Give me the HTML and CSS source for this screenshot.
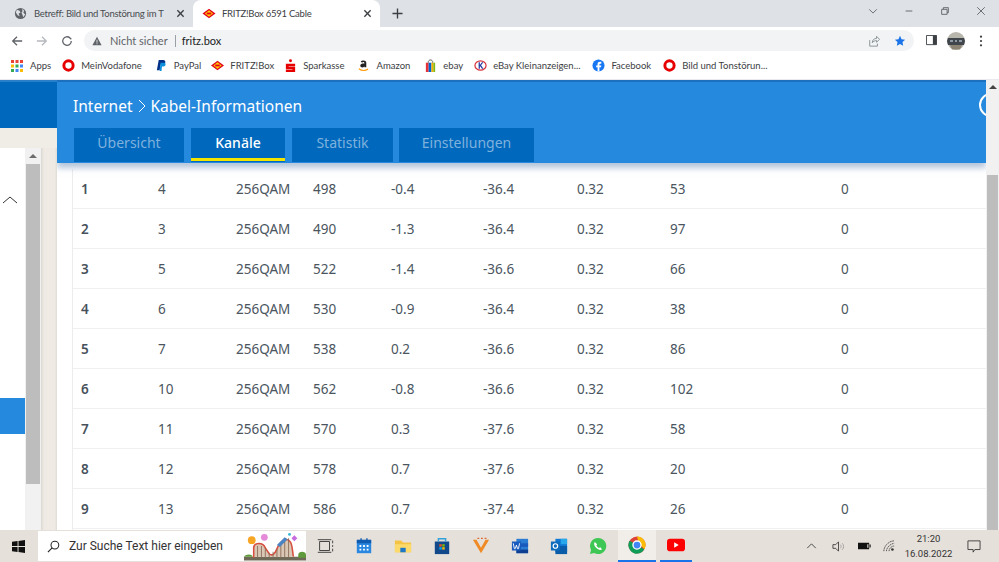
FILE: index.html
```html
<!DOCTYPE html>
<html lang="de">
<head>
<meta charset="utf-8">
<title>FRITZ!Box 6591 Cable</title>
<link rel="stylesheet" href="styles.css">
</head>
<body>
<div class="tabstrip">
  <div class="tab tab-inactive">
    <svg class="favicon" viewBox="0 0 14 14"><circle cx="7" cy="7" r="6" fill="#5f6368"/><path d="M3 3l3 1 1 2-2 1 1 3-2-1-2-3zM9 2l2 2-1 2 2 2-2 3-1-3-1-2 1-1z" fill="#dee1e6"/></svg>
    <span class="tab-title">Betreff: Bild und Tonstörung im T</span>
    <svg class="tab-x" viewBox="0 0 10 10"><path d="M1.5 1.5l7 7M8.500 1.500l-7 7"/></svg>
  </div>
  <div class="tab tab-active">
    <svg class="favicon" viewBox="0 0 14 14"><path d="M7 2l7 5-7 5-7-5z" fill="#e2001a"/><path d="M7 3.500l4.500 3.500L7 10.500 2.500 7z" fill="#ffcc00"/><path d="M4.500 6h5v2h-5z" fill="#e2001a"/></svg>
    <span class="tab-title">FRITZ!Box 6591 Cable</span>
    <svg class="tab-x" viewBox="0 0 10 10"><path d="M1.5 1.5l7 7M8.500 1.500l-7 7"/></svg>
  </div>
  <svg class="newtab" viewBox="0 0 12 12"><path d="M6 .5v11M.5 6h11"/></svg>
  <div class="winctrls">
    <svg viewBox="0 0 12 12"><path d="M1.500 4l4.500 4.500L10.500 4"/></svg>
    <svg viewBox="0 0 12 12"><path d="M2 6h8"/></svg>
    <svg viewBox="0 0 12 12"><path d="M2 4h6.500v6H2zM4 4V2h6v6H8.500"/></svg>
    <svg viewBox="0 0 12 12"><path d="M1.500 1.500l9 9M10.500 1.500l-9 9"/></svg>
  </div>
</div>

<div class="toolbar">
  <svg class="navbtn" viewBox="0 0 14 14"><path d="M13 7H2M7 2L2 7l5 5" stroke="#5f6368"/></svg>
  <svg class="navbtn" viewBox="0 0 14 14"><path d="M1 7h11M7 2l5 5-5 5" stroke="#b5b8bc"/></svg>
  <svg class="navbtn" viewBox="0 0 14 14"><path d="M12 7a5 5 0 1 1-1.500-3.500L12 5" stroke="#5f6368"/><path d="M12.500 1.500v4h-4z" fill="#5f6368"/></svg>
  <div class="omnibox">
    <svg class="warn" viewBox="0 0 12 12"><path d="M6 1l5.500 10H.5z" fill="#5f6368"/><path d="M5.500 4.500h1v3.500h-1zM5.500 8.800h1v1h-1z" fill="#f1f3f4"/></svg>
    <span class="insecure">Nicht sicher</span>
    <span class="omni-sep"></span>
    <span class="url">fritz.box</span>
    <svg class="share" viewBox="0 0 14 14"><path d="M2 6v7h9v-3M5 9c0-3 2-5 5-5V1.500L13.500 5 10 8.500V6.500C8 6.500 6 7.500 5 9z" fill="none" stroke="#80868b"/></svg>
    <svg class="star" viewBox="0 0 14 14"><path d="M7 1l1.800 3.900 4.200.5-3.100 2.900.8 4.200L7 10.400 3.300 12.500l.8-4.200L1 5.400l4.200-.5z" fill="#1a73e8"/></svg>
  </div>
  <svg class="panelbtn" viewBox="0 0 12 12"><path d="M.5.5h11v10H.5z" fill="#fff" stroke="#3c4043"/><path d="M7.500.5h4v10h-4z" fill="#3c4043"/></svg>
  <svg class="avatar" viewBox="0 0 18 18"><circle cx="9" cy="9" r="9" fill="#b9b6ae"/><path d="M1 6h16l1 3-1 4H1L0 9z" fill="#3f454b"/><path d="M3 13h12l-2 4.500H5z" fill="#8b8472"/><path d="M3 8h3v2H3zM8 8h2v2H8zM12 8h3v2h-3z" fill="#8d99a3"/></svg>
  <svg class="menu" viewBox="0 0 4 14"><circle cx="2" cy="2" r="1.300"/><circle cx="2" cy="7" r="1.300"/><circle cx="2" cy="12" r="1.300"/></svg>
</div>

<div class="bookmarks">
  <div class="bm bm-apps"><svg viewBox="0 0 12 12"><g><path fill="#ea4335" d="M0 0h3v3H0zM4.500 0h3v3h-3zM9 0h3v3H9z"/><path fill="#fbbc04" d="M0 4.500h3v3H0zM9 9h3v3H9z"/><path fill="#34a853" d="M4.500 4.500h3v3h-3zM0 9h3v3H0z"/><path fill="#4285f4" d="M9 4.500h3v3H9zM4.500 9h3v3h-3z"/></g></svg><span>Apps</span></div>
  <div class="bm bm-voda"><svg viewBox="0 0 14 14"><circle cx="7" cy="7" r="5" fill="none" stroke="#e60000" stroke-width="3.200"/></svg><span>MeinVodafone</span></div>
  <div class="bm bm-paypal"><svg viewBox="0 0 14 14"><path d="M4 1h5c3 0 3 5-1 5H6l-1 6H2z" fill="#003087"/><path d="M6 4h4c2 0 2 4-1 4H7.500L7 13H5z" fill="#0a8fdc"/></svg><span>PayPal</span></div>
  <div class="bm bm-fritz"><svg viewBox="0 0 14 14"><path d="M7 2l7 5-7 5-7-5z" fill="#e2001a"/><path d="M7 3.500l4.500 3.500L7 10.500 2.500 7z" fill="#ffcc00"/><path d="M4.500 6h5v2h-5z" fill="#e2001a"/></svg><span>FRITZ!Box</span></div>
  <div class="bm bm-spark"><svg viewBox="0 0 14 14"><circle cx="7" cy="2" r="1.600" fill="#e60000"/><path d="M2 5h10v2.500H5v.5h7v6H2v-2.500h7V11H2z" fill="#e60000"/></svg><span>Sparkasse</span></div>
  <div class="bm bm-amazon"><svg viewBox="0 0 14 14"><path d="M4 3c1-2 6-2 6 1v5H8V8C6 10 3.500 9 3.500 7S6 4.500 8 4.800C8 3 6 3 5.500 4z" fill="#222"/><path d="M2 10.500c3 2.200 7 2.200 10 .3" fill="none" stroke="#f90" stroke-width="1.200"/></svg><span>Amazon</span></div>
  <div class="bm bm-ebay"><svg viewBox="0 0 14 14"><path d="M2 4h3v10H2z" fill="#e53238"/><path d="M5 4h3v10H5z" fill="#0064d2"/><path d="M8 4h2v10H8z" fill="#f5af02"/><path d="M10 4h2v10h-2z" fill="#86b817"/><path d="M4.500 4c0-4 5-4 5 0" fill="none" stroke="#555"/></svg><span>ebay</span></div>
  <div class="bm bm-klein"><svg viewBox="0 0 14 14"><ellipse cx="7" cy="7" rx="6" ry="5" fill="#fff" stroke="#d8323c" stroke-width="1.300"/><path d="M5 3.500h1.300v3l2.300-3h1.500L7.600 6.800l2.600 3.700H8.600L6.300 7.400v3.100H5z" fill="#1f2f9e"/></svg><span>eBay Kleinanzeigen...</span></div>
  <div class="bm bm-fb"><svg viewBox="0 0 14 14"><circle cx="7" cy="7" r="6.500" fill="#1877f2"/><path d="M6 13.500V9H4.500V7H6V5.500C6 3.800 7 3 8.500 3H10v2H9c-.7 0-1 .3-1 1v1h2l-.3 2H8v4.500z" fill="#fff"/></svg><span>Facebook</span></div>
  <div class="bm bm-bild"><svg viewBox="0 0 14 14"><circle cx="7" cy="7" r="5" fill="none" stroke="#e60000" stroke-width="3.200"/></svg><span>Bild und Tonstörun...</span></div>
</div>

<div class="page">
  <aside class="side">
    <div class="side-top"></div>
    <div class="side-gap"></div>
    <div class="side-body">
      <div class="tree">
        <svg class="tree-chev" viewBox="0 0 16 8"><path d="M1 7l7-6 7 6"/></svg>
        <div class="tree-sel"></div>
      </div>
      <div class="side-scroll">
        <div class="sb-btn"><span class="arrow"></span></div>
        <div class="side-thumb"></div>
      </div>
      <div class="side-strip"></div>
    </div>
  </aside>

  <main class="main">
    <header class="head">
      <h1 class="crumb">Internet <svg class="crumb-sep" viewBox="0 0 8 14"><path d="M1 1l6 6-6 6"/></svg> Kabel-Informationen</h1>
      <span class="ring"></span>
      <nav class="tabs">
        <a class="ftab ftab-1">Übersicht</a>
        <a class="ftab ftab-2 ftab-on">Kanäle</a>
        <a class="ftab ftab-3">Statistik</a>
        <a class="ftab ftab-4">Einstellungen</a>
      </nav>
    </header>
    <div class="rows">
      <div class="row"><b>1</b><span>4</span><span>256QAM</span><span>498</span><span>-0.4</span><span>-36.4</span><span>0.32</span><span>53</span><span>0</span></div>
      <div class="row"><b>2</b><span>3</span><span>256QAM</span><span>490</span><span>-1.3</span><span>-36.4</span><span>0.32</span><span>97</span><span>0</span></div>
      <div class="row"><b>3</b><span>5</span><span>256QAM</span><span>522</span><span>-1.4</span><span>-36.6</span><span>0.32</span><span>66</span><span>0</span></div>
      <div class="row"><b>4</b><span>6</span><span>256QAM</span><span>530</span><span>-0.9</span><span>-36.4</span><span>0.32</span><span>38</span><span>0</span></div>
      <div class="row"><b>5</b><span>7</span><span>256QAM</span><span>538</span><span>0.2</span><span>-36.6</span><span>0.32</span><span>86</span><span>0</span></div>
      <div class="row"><b>6</b><span>10</span><span>256QAM</span><span>562</span><span>-0.8</span><span>-36.6</span><span>0.32</span><span>102</span><span>0</span></div>
      <div class="row"><b>7</b><span>11</span><span>256QAM</span><span>570</span><span>0.3</span><span>-37.6</span><span>0.32</span><span>58</span><span>0</span></div>
      <div class="row"><b>8</b><span>12</span><span>256QAM</span><span>578</span><span>0.7</span><span>-37.6</span><span>0.32</span><span>20</span><span>0</span></div>
      <div class="row"><b>9</b><span>13</span><span>256QAM</span><span>586</span><span>0.7</span><span>-37.4</span><span>0.32</span><span>26</span><span>0</span></div>
    </div>
  </main>

  <div class="page-scroll">
    <div class="sb-btn"><span class="arrow"></span></div>
    <div class="page-thumb"></div>
  </div>
</div>

<footer class="taskbar">
  <svg class="win" viewBox="0 0 14 14"><path d="M0 2l6-.9V6.500H0zM7 1l7-1v6.500H7zM0 7.500h6v5.400L0 12zM7 7.500h7V14l-7-1z" fill="#111"/></svg>
  <div class="search">
    <svg class="lens" viewBox="0 0 14 14"><circle cx="8.500" cy="5.500" r="4.200" fill="none" stroke="#222" stroke-width="1.100"/><path d="M5.500 8.500L1 13" stroke="#222" stroke-width="1.200"/></svg>
    <span class="search-text">Zur Suche Text hier eingeben</span>
    <svg class="coaster" viewBox="0 0 64 30">
      <circle cx="8" cy="9" r="4" fill="#f6a623"/><circle cx="21" cy="6" r="3.500" fill="#e58ad8"/><path d="M52 4l3 3-3 3-3-3z" fill="#c66be0"/><circle cx="47" cy="3" r="1.500" fill="#35b6d6"/>
      <path d="M0 26h64v4H0z" fill="#6f6a58"/><path d="M56 24c0-4 8-4 8 0v3h-8z" fill="#5f9b3a"/><path d="M0 26c2-3 8-3 9 0z" fill="#5f9b3a"/>
      <path d="M10 26v-9c0-6 10-6 12 0l4 6c3 3 6 0 8-5 3-8 10-13 14-7 2 3 2 10 3 15z" fill="#d9c6b4"/>
      <path d="M10 27V17c0-6 10-6 12 0l4 6c3 3 6 0 8-5 3-8 10-13 14-7 2 3 2 10 3 15" fill="none" stroke="#d84f3f" stroke-width="1.600"/>
      <path d="M14 15v12M18 15v12M22 17v10M26 22v5M30 21v6M34 18v9M38 12v15M42 8v19M46 7v20" stroke="#8a6a55" stroke-width=".9"/>
      <path d="M34 14l8-8 3 2-8 8z" fill="#4a84c4"/>
    </svg>
  </div>
  <div class="task-icons">
    <svg class="ti" viewBox="0 0 20 20"><path d="M4 5h11v10H4zM2 3h15M2 17h15M18.500 4v3M18.500 9v2M18.500 13v3" fill="none" stroke="#333" stroke-width="1"/></svg>
    <svg class="ti" viewBox="0 0 20 20"><path d="M2 4h16v14H2z" fill="#2b88e0"/><path d="M2 3h16v4H2z" fill="#0f5bb0"/><path d="M6 1.500h1.500v3H6zM12.500 1.500H14v3h-1.500z" fill="#0f5bb0"/><path d="M5 9h2v2H5zM9 9h2v2H9zM13 9h2v2h-2zM5 13h2v2H5zM9 13h2v2H9zM13 13h2v2h-2z" fill="#fff"/></svg>
    <svg class="ti" viewBox="0 0 20 20"><path d="M1 4h7l2 2h9v11H1z" fill="#f5c344"/><path d="M1 8h18v9H1z" fill="#fbd96b"/><path d="M7 12h6v5H7z" fill="#1e78c8"/></svg>
    <svg class="ti" viewBox="0 0 20 20"><path d="M2 5h16v14H2z" fill="#11498a"/><path d="M6 5V2h8v3" fill="none" stroke="#32a0da" stroke-width="1.600"/><path d="M7 8h2.700v2.700H7z" fill="#f25022"/><path d="M10.300 8H13v2.700h-2.700z" fill="#7fba00"/><path d="M7 11.300h2.700V14H7z" fill="#00a4ef"/><path d="M10.300 11.300H13V14h-2.700z" fill="#ffb900"/></svg>
    <svg class="ti" viewBox="0 0 20 20"><path d="M1 3l9 15 9-15h-4l-5 9-5-9z" fill="#f08a24"/><path d="M6 1.500h2M10 1.500h2M14 1.500h2" stroke="#e0672a" stroke-width="1.500"/></svg>
    <svg class="ti" viewBox="0 0 20 20"><path d="M6 2h13v16H6z" fill="#2b7cd3"/><path d="M6 7h13v4H6z" fill="#185abd"/><path d="M6 14h13v4H6z" fill="#103f91"/><path d="M1 5h10v10H1z" fill="#185abd"/><path d="M2.500 7l1.200 6h1l1.300-4 1.300 4h1L9.500 7" fill="none" stroke="#fff"/></svg>
    <svg class="ti" viewBox="0 0 20 20"><path d="M6 2h13v15H6z" fill="#0f78d4"/><path d="M12 2h7v6h-7z" fill="#28a8ea"/><path d="M6 10l13 0v9H6z" fill="#0a5ba8"/><path d="M1 5h10v10H1z" fill="#0f6cbd"/><circle cx="6" cy="10" r="2.500" fill="none" stroke="#fff" stroke-width="1.300"/></svg>
    <svg class="ti" viewBox="0 0 20 20"><path d="M10 1a9 9 0 0 0-7.700 13.500L1 19l4.700-1.200A9 9 0 1 0 10 1z" fill="#3fc755"/><path d="M6.500 5.500c-1.500 1.500-1 4 1.500 6.500s5 3 6.500 1.500l-2-2-1.500.8c-1-.5-2.300-1.800-2.800-2.800l.8-1.500z" fill="#fff"/></svg>
    <div class="ti-wrap ti-active"><svg class="ti-in" viewBox="0 0 20 20"><circle cx="10" cy="10" r="9.500" fill="#db4437"/><path d="M10 10L18.200 14.800A9.500 9.500 0 0 1 5.800 18.500z" fill="#0f9d58"/><path d="M10 .5a9.500 9.500 0 0 1 8.200 14.300L12 8z" fill="#fbbc05"/><path d="M1.800 5.200A9.500 9.500 0 0 0 10 19.500l4-7z" fill="#0f9d58"/><circle cx="10" cy="10" r="4.500" fill="#4285f4" stroke="#fff" stroke-width="1.500"/></svg></div>
    <div class="ti-wrap ti-open"><svg class="ti-in" viewBox="0 0 20 20"><rect y="3" width="20" height="14" rx="3.500" fill="#f00"/><path d="M8 7l5 3-5 3z" fill="#fff"/></svg></div>
  </div>
  <div class="tray">
    <svg class="t-chev" viewBox="0 0 12 7"><path d="M1 6l5-5 5 5"/></svg>
    <svg class="t-vol" viewBox="0 0 14 14"><path d="M1 5h3l3-3v10L4 9H1z" fill="none" stroke="#333" stroke-width=".9"/><path d="M9 5c1 1 1 3 0 4M11 3.500c2 2 2 5 0 7" fill="none" stroke="#999" stroke-width=".9"/></svg>
    <svg class="t-bat" viewBox="0 0 14 8"><path d="M0 .5h12v7H0z" fill="#111"/><path d="M12 2.500h2v3h-2z" fill="#555"/><path d="M10 2h1.200v4H10z" fill="#e4dfd9"/></svg>
    <svg class="t-wifi" viewBox="0 0 14 14"><path d="M1 13C1 7 7 1 13 1M4 13c0-4 5-9 9-9M7 13c0-3 3-6 6-6" fill="none" stroke="#444" stroke-width="1" stroke-dasharray="2 .7"/><circle cx="11" cy="11" r="1.500" fill="#333"/></svg>
    <div class="clock"><span>21:20</span><span>16.08.2022</span></div>
    <svg class="t-note" viewBox="0 0 16 15"><path d="M1 1h14v10H9l-2 3V11H1z" fill="none" stroke="#333"/></svg>
  </div>
</footer>
</body>
</html>
```

FILE: styles.css
```css
* { box-sizing: border-box; }
html, body { margin: 0; height: 100%; }
body {
  width: 999px;
  height: 562px;
  overflow: hidden;
  display: flex;
  flex-direction: column;
  font-family: Lato, "Noto Sans", sans-serif;
  background: #fff;
}

/* tab strip */
.tabstrip {
  height: 27px;
  flex: none;
  background: #dee1e6;
  display: flex;
  align-items: stretch;
  padding-left: 8px;
}
.tab {
  display: flex;
  align-items: center;
  font-size: 9.500px;
  letter-spacing: -0.250px;
  color: #3c4043;
  white-space: nowrap;
}
.tab-inactive { width: 185px; padding-left: 6px; color: #494c50; }
.tab-active {
  width: 187px;
  padding-left: 9px;
  background: #fff;
  border-radius: 8px 8px 0 0;
}
.favicon { width: 13px; height: 13px; flex: none; margin-right: 7px; }
.tab-active .favicon { margin-right: 6px; width: 14px; }
.tab-title { flex: 1; overflow: hidden; }
.tab-x { width: 9px; height: 9px; flex: none; margin: 0 8px 0 9px; }
.tab-x path { stroke: #3c4043; stroke-width: 1.500; fill: none; }
.newtab { width: 11px; height: 11px; align-self: center; margin-left: 12px; }
.newtab path { stroke: #3c4043; stroke-width: 1.500; fill: none; }
.winctrls {
  margin-left: auto;
  display: flex;
  align-items: center;
  gap: 26px;
  padding: 0 13px 5px 0;
}
.winctrls svg { width: 10px; height: 10px; }
.winctrls path { fill: none; stroke: #55585c; stroke-width: 1; }

/* toolbar */
.toolbar {
  height: 27px;
  flex: none;
  background: #fff;
  display: flex;
  align-items: center;
  padding-left: 11px;
}
.navbtn { width: 12px; height: 12px; margin-right: 13px; flex: none; }
.navbtn path { fill: none; stroke-width: 1.500; }
.navbtn path[fill] { stroke: none; }
.omnibox {
  margin-left: -2px;
  width: 830px;
  height: 21px;
  border-radius: 11px;
  background: #f1f3f4;
  display: flex;
  align-items: center;
  padding-left: 8px;
  font-size: 11px;
}
.warn { width: 10px; height: 10px; margin-right: 8px; }
.insecure { color: #5f6368; }
.omni-sep { width: 1px; height: 12px; background: #9aa0a6; margin: 0 6px 0 7px; }
.url { color: #202124; }
.share { width: 12px; height: 12px; margin-left: auto; }
.star { width: 12px; height: 12px; margin: 0 8px 0 14px; }
.panelbtn { width: 11px; height: 11px; margin-left: 12px; flex: none; }
.avatar { width: 18px; height: 18px; margin-left: 10px; flex: none; }
.menu { width: 4px; height: 12px; margin-left: 14px; flex: none; fill: #3c4043; }

/* bookmarks */
.bookmarks {
  height: 26px;
  flex: none;
  padding-bottom: 2px;
  border-bottom: 1px solid #e8eaed;
  background: #fff;
  display: flex;
  align-items: center;
  font-size: 9.500px;
  color: #3c4043;
  white-space: nowrap;
}
.bm { display: flex; align-items: center; gap: 6px; flex: none; }
.bm svg { width: 13px; height: 13px; flex: none; }
.bm-apps { margin-left: 11px; gap: 7px; }
.bm-apps svg { width: 12px; height: 12px; }
.bm-voda { margin-left: 11px; }
.bm-paypal { margin-left: 13px; }
.bm-fritz { margin-left: 10px; }
.bm-spark { margin-left: 10px; }
.bm-amazon { margin-left: 13px; }
.bm-ebay { margin-left: 14px; }
.bm-klein { margin-left: 11px; }
.bm-fb { margin-left: 12px; }
.bm-bild { margin-left: 12px; }

/* page */
.page {
  flex: 1;
  min-height: 0;
  display: flex;
  overflow: hidden;
}
.side { width: 57px; flex: none; display: flex; flex-direction: column; background: #f0ede6; }
.side-top { height: 48px; flex: none; background: #0069bd; border-top: 2px solid #2a7fc9; }
.side-gap { height: 20px; flex: none; }
.side-body { flex: 1; display: flex; min-height: 0; }
.tree { width: 25px; flex: none; background: #fff; padding-top: 48px; }
.tree-chev { display: block; width: 16px; height: 8px; margin-left: 2px; }
.tree-chev path { fill: none; stroke: #333; stroke-width: 1; }
.tree-sel { height: 36px; margin-top: 194px; background: #2589de; }
.side-scroll { width: 16px; flex: none; background: #f1f1f1; padding: 0 1px; }
.side-thumb { height: 320px; background: #bdbdbd; }
.side-strip { flex: 1; background: linear-gradient(90deg, #dcd9d2, #efebe4 20%, #efebe4 85%, #dedcd6); }
.sb-btn { height: 16px; display: flex; align-items: center; justify-content: center; }
.arrow {
  width: 0; height: 0;
  border-left: 4px solid transparent;
  border-right: 4px solid transparent;
  border-bottom: 4px solid #6d6d6d;
}
.main {
  flex: 1;
  min-width: 0;
  display: flex;
  flex-direction: column;
  background: #fff;
  overflow: hidden;
}
.head {
  position: relative;
  height: 83px;
  flex: none;
  background: #2589de;
  border-top: 2px solid #1c70bd;
  padding: 9px 0 0 16px;
  box-shadow: 0 5px 6px rgba(120, 150, 190, .55);
  z-index: 1;
}
.crumb {
  margin: 0;
  height: 37px;
  padding-bottom: 7px;
  font: 400 15.500px/22px "Noto Sans", "Open Sans", sans-serif;
  color: #fff;
  display: flex;
  align-items: center;
  gap: 5px;
}
.crumb-sep { width: 8px; height: 14px; }
.crumb-sep path { fill: none; stroke: #fff; stroke-width: 1; }
.ring {
  position: absolute;
  right: -17px;
  top: 11px;
  width: 24px;
  height: 24px;
  border: 2px solid #fff;
  border-radius: 50%;
}
.tabs { display: flex; gap: 7px; margin-left: 1px; height: 34px; }
.ftab {
  background: #0069bd;
  color: #7fb1dd;
  font: 400 14px/30px "Noto Sans", "Open Sans", sans-serif;
  text-align: center;
  height: 34px;
}
.ftab-1 { width: 110px; }
.ftab-2 { width: 94px; }
.ftab-3 { width: 101px; }
.ftab-4 { width: 135px; margin-left: -1px; }
.ftab-on {
  color: #fff;
  font-weight: 500;
  position: relative;
}
.ftab-on::after {
  content: "";
  position: absolute;
  left: 0; right: 0;
  bottom: 1px;
  height: 3px;
  background: #f4e500;
}
.rows {
  flex: 1;
  margin: 6px 0 0 15px;
  border-left: 1px solid #ececec;
  overflow: hidden;
}
.row {
  height: 40px;
  display: grid;
  grid-template-columns: 77px 78px 77px 78px 92px 94px 93px 171px 1fr;
  align-items: center;
  padding-left: 8px;
  border-bottom: 1px solid #f0f0f0;
  font: 400 13.500px/20px "Noto Sans", "Open Sans", sans-serif;
  color: #4a5560;
}
.row b { font-weight: 600; color: #46515c; }
.page-scroll { width: 13px; flex: none; background: #f1f1f1; padding: 0 1px; }
.page-scroll .sb-btn { height: 13px; }
.page-scroll .arrow { border-bottom-color: #444; }
.page-thumb { height: 355px; margin-top: 82px; background: #bdbdbd; }

/* taskbar */
.taskbar {
  height: 32px;
  flex: none;
  background: #e6e0da;
  display: flex;
  align-items: center;
}
.win { width: 13px; height: 13px; margin-left: 12px; flex: none; }
.search {
  width: 268px;
  height: 30px;
  margin-left: 13px;
  flex: none;
  background: #fff;
  display: flex;
  align-items: center;
  padding-left: 9px;
  overflow: hidden;
}
.lens { width: 13px; height: 13px; flex: none; }
.search-text { font: 12px Roboto, sans-serif; color: #333; margin-left: 9px; white-space: nowrap; }
.coaster { width: 62px; height: 30px; margin-left: auto; flex: none; }
.task-icons { display: flex; align-items: center; height: 32px; margin-left: 10px; }
.ti { width: 18px; height: 18px; flex: none; margin-right: 21px; }
.ti-wrap {
  height: 32px;
  display: flex;
  align-items: center;
  justify-content: center;
  border-bottom: 2px solid #1a73e8;
  flex: none;
}
.ti-active { width: 38px; background: #f1eeea; margin-left: -10px; }
.ti-open { width: 32px; margin-left: 4px; }
.ti-in { width: 18px; height: 18px; }
.tray { margin-left: auto; display: flex; align-items: center; height: 32px; }
.t-chev { width: 11px; height: 6px; flex: none; }
.t-chev path { fill: none; stroke: #333; stroke-width: 1; }
.t-vol { width: 13px; height: 13px; margin-left: 15px; flex: none; }
.t-bat { width: 13px; height: 8px; margin-left: 13px; flex: none; }
.t-wifi { width: 12px; height: 12px; margin-left: 12px; flex: none; }
.clock {
  width: 57px;
  margin-left: 5px;
  display: flex;
  flex-direction: column;
  align-items: center;
  font: 9.500px/15px Roboto, sans-serif;
  color: #333;
}
.t-note { width: 14px; height: 13px; margin: 0 18px 0 10px; flex: none; }
```
